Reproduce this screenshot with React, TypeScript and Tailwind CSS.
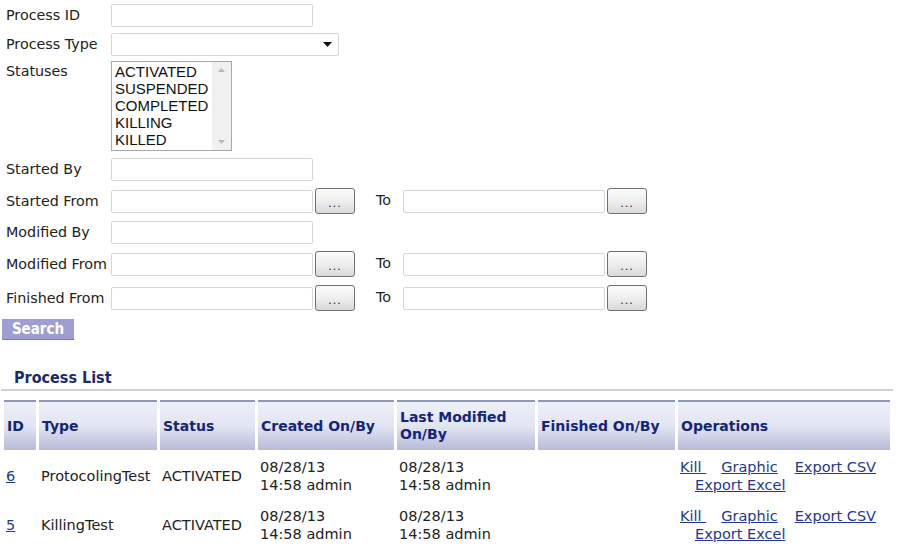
import React from "react";

const label = "w-[105px] shrink-0 text-[14.3px] text-[#222] leading-none";
const lblFont = { fontFamily: '"DejaVu Sans", Verdana, sans-serif' };

function TextInput({ w = "w-[202px]" }: { w?: string }) {
  return <div className={`${w} h-[23px] border border-[#d6d6d6] rounded-[2px] bg-white`} />;
}

function DateBtn() {
  return (
    <div className="ml-[2px] w-[40px] h-[26px] border border-[#707070] rounded-[3px] bg-gradient-to-b from-[#fbfbfb] via-[#eeeeee] to-[#d9d9d9] flex items-end justify-center pb-[4px]">
      <span className="text-[11px] leading-none text-[#222] tracking-[1px]" style={{ fontFamily: '"DejaVu Sans", Verdana, sans-serif' }}>...</span>
    </div>
  );
}

function DateRow({ name, mt }: { name: string; mt: string }) {
  return (
    <div className={`flex items-center ${mt} pl-[6px]`}>
      <div className={label} style={lblFont}>{name}</div>
      <TextInput />
      <DateBtn />
      <div className="ml-[21px] w-[27px] text-[14.3px] text-[#222]" style={lblFont}>To</div>
      <TextInput />
      <DateBtn />
    </div>
  );
}

const headers = [
  { t: "ID", w: "w-[32px]" },
  { t: "Type", w: "w-[118px]" },
  { t: "Status", w: "w-[95px]" },
  { t: "Created On/By", w: "w-[136px]" },
  { t: "Last Modified On/By", w: "w-[138px]" },
  { t: "Finished On/By", w: "w-[137px]" },
  { t: "Operations", w: "w-[212px]" },
];

const rows = [
  { id: "6", type: "ProtocolingTest" },
  { id: "5", type: "KillingTest" },
];

export default function App() {
  const tableFont = { fontFamily: '"DejaVu Sans", Verdana, sans-serif' };
  return (
    <div className="w-[899px] h-[549px] bg-white overflow-hidden">
      <div className="flex items-center pt-[4px] pl-[6px]">
        <div className={label} style={lblFont}>Process ID</div>
        <TextInput />
      </div>
      <div className="flex items-center mt-[6px] pl-[6px]">
        <div className={label} style={lblFont}>Process Type</div>
        <div className="w-[228px] h-[23px] border border-[#d6d6d6] rounded-[2px] bg-white flex items-center justify-end pr-[6px]">
          <svg width="9" height="5" viewBox="0 0 9 5"><path d="M0 0H9L4.5 5Z" fill="#111" /></svg>
        </div>
      </div>
      <div className="flex items-start mt-[5px] pl-[6px]">
        <div className={`${label} pt-[3px]`} style={lblFont}>Statuses</div>
        <div className="w-[121px] h-[90px] border border-[#a8a8a8] bg-white flex">
          <div className="flex-1 pl-[3px] pt-[1px] text-[15px] leading-[17px] text-[#111]" style={{ fontFamily: '"Liberation Sans", Arial, sans-serif' }}>
            <div>ACTIVATED</div>
            <div>SUSPENDED</div>
            <div>COMPLETED</div>
            <div>KILLING</div>
            <div>KILLED</div>
          </div>
          <div className="w-[19px] bg-[#f0f0f0] flex flex-col justify-between items-center py-[6px]">
            <svg width="7" height="4" viewBox="0 0 7 4"><path d="M0 4L3.5 0L7 4Z" fill="#b8b8b8" /></svg>
            <svg width="7" height="4" viewBox="0 0 7 4"><path d="M0 0H7L3.5 4Z" fill="#b8b8b8" /></svg>
          </div>
        </div>
      </div>
      <div className="flex items-center mt-[7px] pl-[6px]">
        <div className={label} style={lblFont}>Started By</div>
        <TextInput />
      </div>
      <DateRow name="Started From" mt="mt-[7px]" />
      <div className="flex items-center mt-[7px] pl-[6px]">
        <div className={label} style={lblFont}>Modified By</div>
        <TextInput />
      </div>
      <DateRow name="Modified From" mt="mt-[7px]" />
      <DateRow name="Finished From" mt="mt-[8px]" />
      <div className="mt-[8px] ml-[2px] w-[72px] h-[21px] bg-[#9f9ed2] border-b border-[#7b7ab8] flex items-center justify-center">
        <span className="text-white font-bold text-[15px] leading-none pt-[1px]" style={{ fontFamily: '"DejaVu Sans Condensed", "DejaVu Sans", Tahoma, sans-serif' }}>Search</span>
      </div>

      <div className="mt-[28px] pl-[14px] text-[16px] font-bold text-[#1b2a6b] leading-[20px]" style={{ fontFamily: '"DejaVu Sans Condensed", "DejaVu Sans", Tahoma, sans-serif' }}>
        Process List
      </div>
      <div className="ml-[1px] w-[892px] h-[2px] bg-[#d0d0d0] mt-[1px]" />

      <table className="mt-[6px] ml-[1px] w-[892px] table-fixed border-separate border-spacing-[3px]" style={tableFont}>
        <thead>
          <tr>
            {headers.map((h) => (
              <th
                key={h.t}
                className={`${h.w} h-[50px] px-[3px] text-left align-middle text-[14px] leading-[17px] font-bold text-[#132579] border-t-2 border-[#8d97b8] bg-gradient-to-b from-[#eef0f8] via-[#e2e5f2] to-[#b7bbd8]`}
              >
                {h.t === "Last Modified On/By" ? (
                  <>
                    Last Modified
                    <br />
                    On/By
                  </>
                ) : (
                  h.t
                )}
              </th>
            ))}
          </tr>
        </thead>
        <tbody className="text-[14.5px] leading-[18px] text-[#222]">
          {rows.map((r) => (
            <tr key={r.id}>
              <td className="h-[46px] px-[2px] align-middle">
                <span className="underline text-[#1f3890]">{r.id}</span>
              </td>
              <td className="px-[2px] align-middle whitespace-nowrap">{r.type}</td>
              <td className="px-[2px] align-middle">ACTIVATED</td>
              <td className="px-[2px] align-middle">
                08/28/13
                <br />
                14:58 admin
              </td>
              <td className="px-[2px] align-middle">
                08/28/13
                <br />
                14:58 admin
              </td>
              <td className="px-[2px] align-middle"></td>
              <td className="px-[2px] align-middle text-[#1f3890]">
                <div className="flex whitespace-nowrap">
                  <span className="underline whitespace-pre">Kill </span>
                  <span className="underline ml-[15px]">Graphic</span>
                  <span className="underline ml-[17px]">Export CSV</span>
                </div>
                <div className="ml-[15px]">
                  <span className="underline">Export Excel</span>
                </div>
              </td>
            </tr>
          ))}
        </tbody>
      </table>
    </div>
  );
}
